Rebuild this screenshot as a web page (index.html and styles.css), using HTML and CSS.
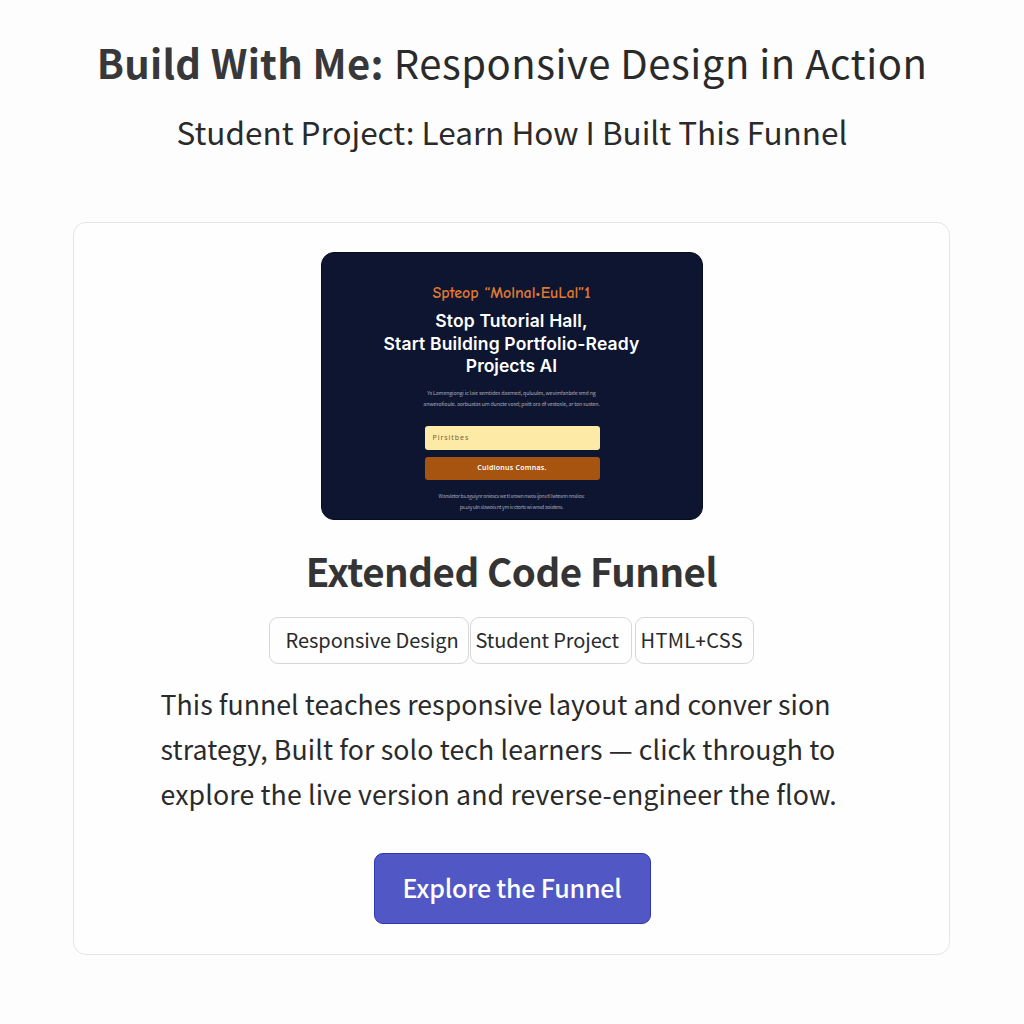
FILE: index.html
```
<!DOCTYPE html>
<html lang="en">
<head>
<meta charset="utf-8">
<title>Build With Me</title>
<link rel="stylesheet" href="styles.css">
</head>
<body>
<header class="intro">
  <h1 class="title"><strong class="title-lead">Build With Me:</strong> <span class="title-rest">Responsive Design in Action</span></h1>
  <p class="subtitle">Student Project: Learn How I Built This Funnel</p>
</header>
<main class="card">
  <section class="preview">
    <p class="script">Spteop “Molnal•EuLal”1</p>
    <h2 class="headline"><span>Stop Tutorial Hall,</span><span>Start Building Portfolio-Ready</span><span class="headline-last">Projects AI</span></h2>
    <p class="fine fine-top"><span>Ys Lamengiongi ic laie semtides daemed, quluules, wevimfanbde smd ng</span><span>anwesofioule. aorbuatas um duncte vosd; psitt ora df vestosle, ar ton susten.</span></p>
    <div class="field">Pirsitbes</div>
    <div class="submit">Cuidionus Comnas.</div>
    <p class="fine fine-bottom"><span>Wansletor bs.aguiynr oniescs we tl srown nwos ijons tl lwtesnn nnslios:</span><span>ps.uiy uln slawois nt ym iv ctorts wi wnsd aoistens.</span></p>
  </section>
  <h2 class="name">Extended Code Funnel</h2>
  <div class="tags">
    <span class="tag tag-responsive">Responsive Design</span>
    <span class="tag tag-student">Student Project</span>
    <span class="tag tag-code">HTML<span class="plus">+</span>CSS</span>
  </div>
  <p class="description"><span class="line-a">This funnel teaches responsive layout and conver sion</span><span class="line-b">strategy, Built for solo tech learners — click through to</span><span class="line-c">explore the live version and reverse-engineer the flow.</span></p>
  <a class="cta" href="#">Explore the Funnel</a>
</main>
</body>
</html>
```
FILE: styles.css
```
* { box-sizing: border-box; }
body {
  margin: 0;
  height: 1024px;
  background: #fdfdfd;
  color: #2a2a2b;
  font-family: "Noto Sans CJK SC", "Noto Sans", sans-serif;
  white-space: nowrap;
}
h1, h2, p { margin: 0; font-weight: 400; }
.intro {
  height: 222px;
  padding-top: 32px;
  display: flex;
  flex-direction: column;
  align-items: center;
}
.title {
  display: flex;
  gap: 10px;
  height: 60px;
  font-size: 40px;
  line-height: 60px;
}
.title-lead { font-weight: 700; color: #38383a; letter-spacing: .3px; }
.title-rest { letter-spacing: .52px; }
.subtitle {
  margin-top: 14px;
  font-size: 31.5px;
  line-height: 50px;
}
.card {
  width: 877px;
  height: 733px;
  margin-left: 73px;
  padding-top: 29px;
  display: flex;
  flex-direction: column;
  align-items: center;
  background: #fefefe;
  border: 1.5px solid #e5e5e6;
  border-radius: 13px;
}
.preview {
  width: 382px;
  height: 268px;
  padding-top: 30px;
  display: flex;
  flex-direction: column;
  align-items: center;
  flex: none;
  background: #0e1530;
  border: 1px solid #060b22;
  border-radius: 13px;
  color: #fff;
}
.script {
  height: 20px;
  color: #df7832;
  font-family: "Comic Neue", "Noto Sans", cursive;
  font-size: 16px;
  font-weight: 600;
  line-height: 20px;
  letter-spacing: -.05px;
}
.headline {
  margin-top: 7px;
  display: flex;
  flex-direction: column;
  align-items: center;
  font-family: Inter, sans-serif;
  font-size: 17.5px;
  font-weight: 600;
  line-height: 22.5px;
  letter-spacing: .15px;
}
.headline-last { letter-spacing: 0; }
.fine {
  display: flex;
  flex-direction: column;
  align-items: center;
  color: #a7abb8;
  font-size: 5.3px;
  line-height: 11px;
}
.fine-top { margin-top: 10px; letter-spacing: -.15px; }
.fine-bottom { margin-top: 10px; font-size: 5px; letter-spacing: -.26px; }
.field, .submit {
  width: 175px;
  flex: none;
  margin-left: 1px;
  border-radius: 3px;
  font-family: "Noto Sans", sans-serif;
}
.field {
  height: 24px;
  margin-top: 16px;
  padding-left: 8px;
  background: #fdeaa6;
  color: #756334;
  font-size: 7px;
  line-height: 24px;
  letter-spacing: .95px;
}
.submit {
  height: 23px;
  margin-top: 7px;
  background: #a75411;
  font-size: 7px;
  font-weight: 600;
  line-height: 22px;
  letter-spacing: .25px;
  text-align: center;
}
.name {
  margin-top: 21px;
  color: #343435;
  font-size: 38.5px;
  font-weight: 700;
  line-height: 58px;
  letter-spacing: -.48px;
}
.tags {
  width: 485px;
  margin: 18px 0 0 -1px;
  display: flex;
}
.tag {
  height: 47px;
  border: 1.5px solid #d7d7d8;
  border-radius: 9px;
  font-size: 20px;
  line-height: 44px;
}
.tag-responsive { width: 200px; padding-left: 16px; letter-spacing: -.03px; }
.tag-student { width: 162px; margin-left: 1px; padding-left: 5px; letter-spacing: -.12px; }
.tag-code { width: 119px; margin-left: 3px; padding-left: 5px; letter-spacing: .35px; }
.plus { font-size: 18px; font-weight: 500; }
.description {
  width: 702px;
  margin-top: 17px;
  display: flex;
  flex-direction: column;
  font-size: 26.7px;
  line-height: 45px;
}
.line-a { letter-spacing: .04px; }
.line-b, .line-c { letter-spacing: .12px; }
.cta {
  width: 277px;
  height: 71px;
  margin: 37px 0 0 1px;
  flex: none;
  background: #5157c5;
  border: 1px solid #3035b0;
  border-radius: 9px;
  color: #fff;
  font-size: 25px;
  font-weight: 500;
  line-height: 66px;
  letter-spacing: -.2px;
  text-align: center;
  text-decoration: none;
}
```
